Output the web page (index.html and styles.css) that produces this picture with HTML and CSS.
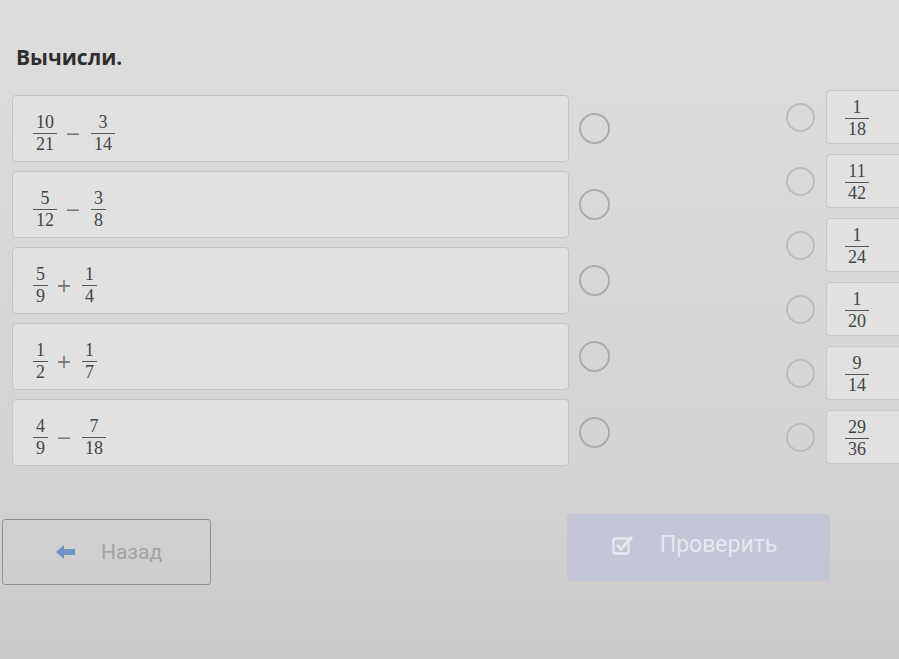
FILE: index.html
```html
<!DOCTYPE html>
<html lang="ru">
<head>
    <meta charset="UTF-8">
    <meta name="viewport" content="width=device-width, initial-scale=1.0">
    <title>Вычисли</title>
    <link rel="stylesheet" href="styles.css">
</head>
<body>
    <main class="task">
        <h1 class="task-title">Вычисли.</h1>

        <div class="board">
            <!-- выражения -->
            <div class="left-list">
                <div class="left-row">
                    <div class="card">
                        <span class="frac"><span>10</span><span class="den">21</span></span>
                        <span class="op">−</span>
                        <span class="frac"><span>3</span><span class="den">14</span></span>
                    </div>
                    <span class="dot"></span>
                </div>
                <div class="left-row">
                    <div class="card">
                        <span class="frac"><span>5</span><span class="den">12</span></span>
                        <span class="op">−</span>
                        <span class="frac"><span>3</span><span class="den">8</span></span>
                    </div>
                    <span class="dot"></span>
                </div>
                <div class="left-row">
                    <div class="card">
                        <span class="frac"><span>5</span><span class="den">9</span></span>
                        <span class="op">+</span>
                        <span class="frac"><span>1</span><span class="den">4</span></span>
                    </div>
                    <span class="dot"></span>
                </div>
                <div class="left-row">
                    <div class="card">
                        <span class="frac"><span>1</span><span class="den">2</span></span>
                        <span class="op">+</span>
                        <span class="frac"><span>1</span><span class="den">7</span></span>
                    </div>
                    <span class="dot"></span>
                </div>
                <div class="left-row">
                    <div class="card">
                        <span class="frac"><span>4</span><span class="den">9</span></span>
                        <span class="op">−</span>
                        <span class="frac"><span>7</span><span class="den">18</span></span>
                    </div>
                    <span class="dot"></span>
                </div>
            </div>

            <!-- ответы -->
            <div class="right-list">
                <div class="right-row">
                    <span class="dot small"></span>
                    <div class="answer"><span class="frac"><span>1</span><span class="den">18</span></span></div>
                </div>
                <div class="right-row">
                    <span class="dot small"></span>
                    <div class="answer"><span class="frac"><span>11</span><span class="den">42</span></span></div>
                </div>
                <div class="right-row">
                    <span class="dot small"></span>
                    <div class="answer"><span class="frac"><span>1</span><span class="den">24</span></span></div>
                </div>
                <div class="right-row">
                    <span class="dot small"></span>
                    <div class="answer"><span class="frac"><span>1</span><span class="den">20</span></span></div>
                </div>
                <div class="right-row">
                    <span class="dot small"></span>
                    <div class="answer"><span class="frac"><span>9</span><span class="den">14</span></span></div>
                </div>
                <div class="right-row">
                    <span class="dot small"></span>
                    <div class="answer"><span class="frac"><span>29</span><span class="den">36</span></span></div>
                </div>
            </div>
        </div>

        <div class="actions">
            <button class="back-button">
                <svg width="22" height="16" viewBox="0 0 22 16"><path d="M1 8 L9 1 V5 H20 V11 H9 V15 Z" fill="#6f93c4"/></svg>
                Назад
            </button>
            <button class="check-button">
                <svg width="22" height="20" viewBox="0 0 22 20"><rect x="1.5" y="3.5" width="15" height="15" rx="1.5" fill="none" stroke="#e6e8f0" stroke-width="2.4"/><path d="M5 10 L9 14 L20 2" fill="none" stroke="#e6e8f0" stroke-width="3"/></svg>
                Проверить
            </button>
        </div>
    </main>
</body>
</html>
```

FILE: styles.css
```css
body {
    margin: 0;
    padding: 0;
    background: linear-gradient(#dddddd, #d5d4d3 70%, #cbcac8);
    font-family: "Open Sans", Arial, sans-serif;
    width: 899px;
    height: 659px;
    overflow: hidden;
}
.task { padding-top: 40px; }
.task-title {
    margin: 0 0 0 16px;
    font-size: 21px;
    line-height: 34px;
    font-weight: 700;
    color: #2e2e2e;
}
.board {
    display: flex;
    align-items: flex-start;
    margin-top: 16px;
    padding-left: 12px;
}
.left-list {
    display: flex;
    flex-direction: column;
    gap: 9px;
    margin-top: 5px;
}
.left-row { display: flex; align-items: center; gap: 10px; }
.card {
    box-sizing: border-box;
    width: 557px;
    height: 67px;
    padding: 9px 20px 0;
    display: flex;
    align-items: center;
    gap: 4px;
    background-color: #e1e1e1;
    border: 1px solid #c5c5c5;
    border-radius: 4px;
}
.dot {
    box-sizing: border-box;
    width: 31px;
    height: 31px;
    border: 2px solid #a9acb4;
    border-radius: 50%;
}
.dot.small { width: 29px; height: 29px; border-color: #b9bcc2; }
.right-list {
    display: flex;
    flex-direction: column;
    gap: 10px;
    margin-left: 176px;
}
.right-row { display: flex; align-items: center; gap: 11px; }
.answer {
    box-sizing: border-box;
    width: 100px;
    height: 54px;
    padding: 2px 0 0 0;
    display: flex;
    align-items: center;
    background-color: #e1e1e1;
    border: 1px solid #c8c8c8;
    border-right: none;
    border-radius: 4px 0 0 4px;
}
.answer .frac { width: 60px; }
.frac {
    display: inline-flex;
    flex-direction: column;
    align-items: center;
    font-family: "Liberation Serif", "DejaVu Serif", serif;
    font-size: 18px;
    line-height: 18px;
    color: #444;
}
.frac .den {
    border-top: 1px solid #555;
    padding: 1px 3px 0;
    margin-top: 2px;
}
.op {
    font-family: "DejaVu Sans", sans-serif;
    font-size: 19px;
    color: #777;
    padding: 0 6px 0 4px;
}
.actions {
    display: flex;
    align-items: flex-start;
    gap: 356px;
    margin-top: 48px;
    padding-left: 2px;
}
.back-button, .check-button {
    display: flex;
    align-items: center;
    justify-content: center;
    font-family: Roboto, Arial, sans-serif;
    cursor: pointer;
}
.back-button {
    margin-top: 5px;
    width: 209px;
    height: 66px;
    gap: 24px;
    padding: 0 0 0 4px;
    font-size: 21px;
    background: transparent;
    color: #a3a3a3;
    border: 1px solid #8f8f8f;
    border-radius: 3px;
}
.check-button {
    width: 263px;
    height: 67px;
    gap: 26px;
    padding: 0 8px 6px 0;
    font-size: 23px;
    background-color: #c2c6d7;
    color: #e6e8f0;
    border: none;
    border-radius: 4px;
}
```
